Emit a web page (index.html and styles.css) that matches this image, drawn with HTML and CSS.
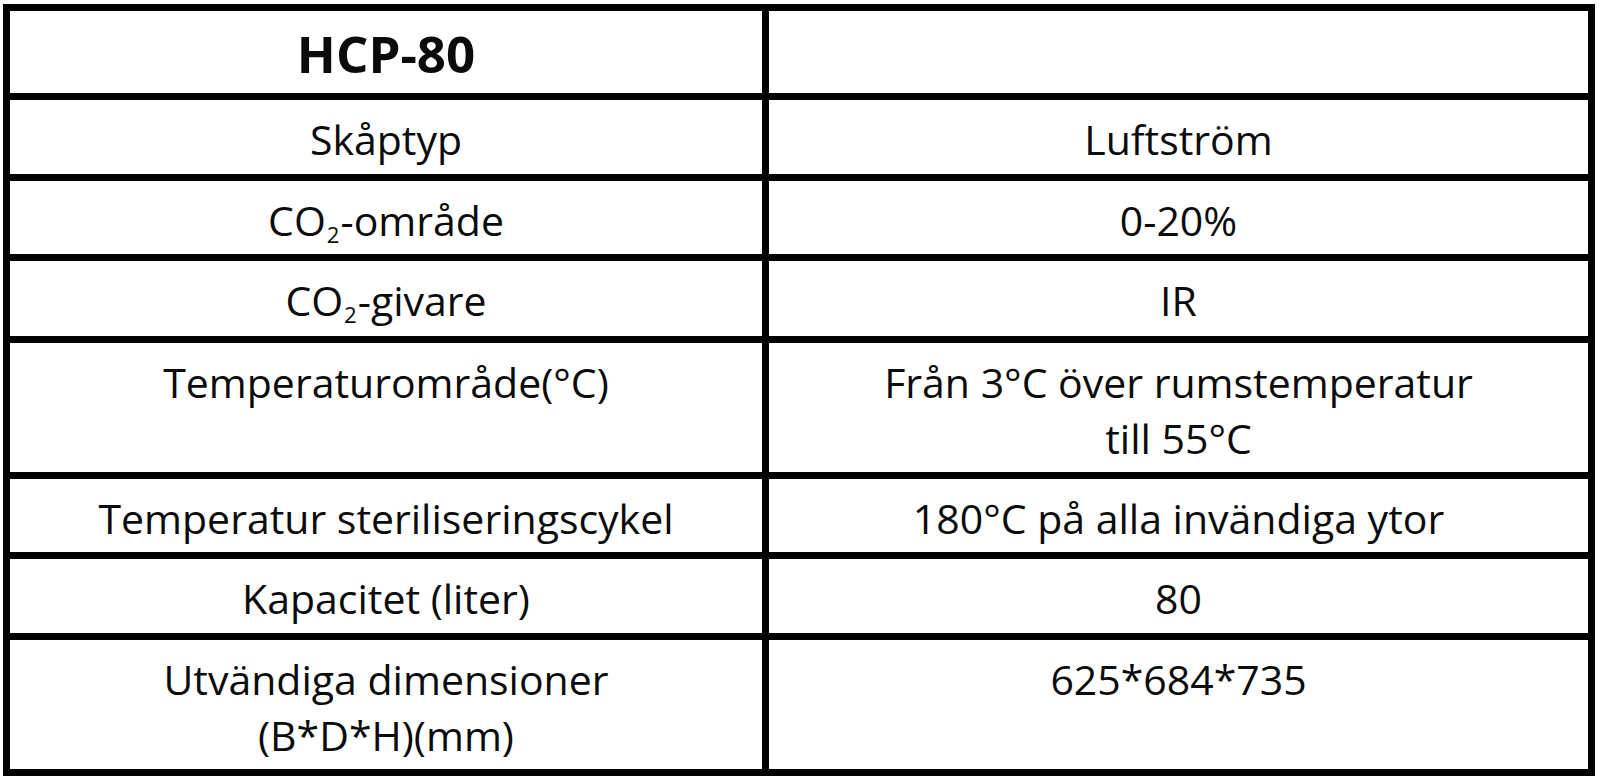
FILE: index.html
```html
<!DOCTYPE html>
<html lang="sv">
<head>
<meta charset="utf-8">
<title>HCP-80</title>
<link rel="stylesheet" href="styles.css">
</head>
<body>
<table class="spec">
  <tr class="r-head">
    <td class="title">HCP-80</td>
    <td></td>
  </tr>
  <tr class="r2">
    <td>Skåptyp</td>
    <td>Luftström</td>
  </tr>
  <tr class="r3">
    <td>CO<sub class="sub">2</sub>-område</td>
    <td>0-20%</td>
  </tr>
  <tr class="r4">
    <td>CO<sub class="sub">2</sub>-givare</td>
    <td>IR</td>
  </tr>
  <tr class="r5">
    <td>Temperaturområde(°C)</td>
    <td>Från 3°C över rumstemperatur<br>till 55°C</td>
  </tr>
  <tr class="r6">
    <td>Temperatur steriliseringscykel</td>
    <td>180°C på alla invändiga ytor</td>
  </tr>
  <tr class="r7">
    <td>Kapacitet (liter)</td>
    <td>80</td>
  </tr>
  <tr class="r8">
    <td>Utvändiga dimensioner<br>(B*D*H)(mm)</td>
    <td>625*684*735</td>
  </tr>
</table>
</body>
</html>
```

FILE: styles.css
```css
html, body {
  margin: 0;
  padding: 0;
  background: #ffffff;
}

body {
  padding: 4px 0 0 3px;
  font-family: "Open Sans", "Noto Sans", sans-serif;
  color: #0b0b0b;
}

.spec {
  border-collapse: separate;
  border-spacing: 7px;
  background: #000000;
  width: 1592px;
  table-layout: fixed;
}

.spec td {
  background: #ffffff;
  padding: 11px 0 0 0;
  vertical-align: top;
  text-align: center;
  font-size: 41px;
  line-height: 56px;
  white-space: nowrap;
}

.spec td:first-child {
  width: 752px;
}

.spec .r-head td {
  padding: 2px 0 0 0;
  vertical-align: middle;
}

.spec .title {
  font-weight: 700;
  font-size: 51px;
  line-height: 60px;
  padding-right: 18px;
}

.r-head { height: 82px; }
.r2 { height: 74px; }
.r3 { height: 73px; }
.r4 { height: 75px; }
.r5 { height: 129px; }
.r6 { height: 73px; }
.r7 { height: 74px; }
.r8 { height: 129px; }

.sub {
  font-size: 0.54em;
  vertical-align: -0.3em;
  line-height: 0;
  padding: 0 1px;
}
```
